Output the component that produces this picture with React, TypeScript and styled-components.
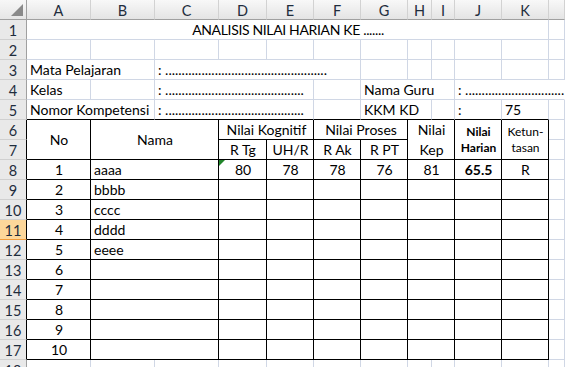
import styled, { createGlobalStyle } from 'styled-components'

const GRID = '#d0d7e5'
const INK = '#000000'

const GlobalStyle = createGlobalStyle`
  html, body {
    margin: 0;
    padding: 0;
    background: #ffffff;
    overflow: hidden;
  }
`

// worksheet: row-header column, A..K, then a sliver of L
const Sheet = styled.div`
  display: grid;
  grid-template-columns: 27px 64px 64px 64px 48px 47px 47px 47px 24px 23px 47px 47px 1fr;
  grid-template-rows: repeat(19, 20px);
  width: 565px;
  height: 367px;
  overflow: hidden;
  background: #ffffff;
  font-family: Lato, "Liberation Sans", sans-serif;
  font-size: 14px;
  color: #000000;
`

const Corner = styled.div`
  grid-column: 1;
  grid-row: 1;
  position: relative;
  box-sizing: border-box;
  background: linear-gradient(#f7f7f7, #e6e6e6);
  border-right: 1px solid #a0a0a0;
  border-bottom: 1px solid #a0a0a0;

  &::after {
    content: '';
    position: absolute;
    right: 3px;
    bottom: 3px;
    width: 0;
    height: 0;
    border-left: 12px solid transparent;
    border-bottom: 12px solid #8a8a8a;
  }
`

const ColHead = styled.div<{ $c: number }>`
  grid-column: ${p => p.$c};
  grid-row: 1;
  box-sizing: border-box;
  display: flex;
  align-items: center;
  justify-content: center;
  background: linear-gradient(#f8f8f8, #e4e4e4);
  border-right: 1px solid #d2d2d2;
  border-bottom: 1px solid #a0a0a0;
  color: #1f2d3d;
  font-size: 14.5px;
  padding-top: 1px;
`

const RowHead = styled.div<{ $r: number; $selected?: boolean; $edge?: boolean }>`
  grid-column: 1;
  grid-row: ${p => p.$r + 1};
  box-sizing: border-box;
  display: flex;
  align-items: center;
  justify-content: center;
  background: ${p => (p.$selected ? '#fdd79a' : '#e9e9e9')};
  border-right: 1px solid ${p => (p.$edge ? INK : p.$selected ? '#f29b3a' : '#a0a0a0')};
  border-bottom: 1px solid ${p => (p.$selected ? '#f29b3a' : '#d0d0d0')};
  color: #1f2d3d;
  font-size: 14.5px;
  padding-top: 1px;
`

const Cell = styled.div<{
  $c: number
  $r: number
  $cs?: number
  $rs?: number
  $left?: boolean
  $right?: string
  $bottom?: string
  $bold?: boolean
  $small?: boolean
  $tight?: boolean
}>`
  grid-column: ${p => p.$c + 1} / span ${p => p.$cs ?? 1};
  grid-row: ${p => p.$r + 1} / span ${p => p.$rs ?? 1};
  position: relative;
  box-sizing: border-box;
  display: flex;
  flex-direction: column;
  justify-content: center;
  align-items: ${p => (p.$left ? 'flex-start' : 'center')};
  padding: 1px 2px 0 3px;
  border-right: 1px solid ${p => p.$right ?? GRID};
  border-bottom: 1px solid ${p => p.$bottom ?? GRID};
  white-space: nowrap;
  overflow: hidden;
  text-align: center;
  font-weight: ${p => (p.$bold ? 700 : 400)};
  font-size: ${p => (p.$small ? '12px' : 'inherit')};
  line-height: ${p => (p.$tight ? '16px' : '20px')};
`

const Title = styled(Cell)`
  letter-spacing: -0.35px;
`

// little green "number stored as text" flag
const TextFlag = styled.span`
  position: absolute;
  top: 0;
  left: 0;
  width: 0;
  height: 0;
  border-top: 6px solid #21852a;
  border-right: 6px solid transparent;
`

const columns = ['A', 'B', 'C', 'D', 'E', 'F', 'G', 'H', 'I', 'J', 'K', '']

const dots = (n: number) => ': ' + '.'.repeat(n)

const students = [
  { no: '1', name: 'aaaa', rtg: '80', uh: '78', rak: '78', rpt: '76', kep: '81', harian: '65.5', ket: 'R' },
  { no: '2', name: 'bbbb' },
  { no: '3', name: 'cccc' },
  { no: '4', name: 'dddd' },
  { no: '5', name: 'eeee' },
  { no: '6' },
  { no: '7' },
  { no: '8' },
  { no: '9' },
  { no: '10' },
] as Array<Record<string, string | undefined>>

const App = () => {
  return (
    <>
      <GlobalStyle />
      <Sheet>
        <Corner />
        {columns.map((c, i) => (
          <ColHead key={`col${i}`} $c={i + 2}>{c}</ColHead>
        ))}
        {Array.from({ length: 18 }, (_, i) => i + 1).map(r => (
          <RowHead key={`row${r}`} $r={r} $selected={r === 11} $edge={r >= 6 && r <= 17}>{r}</RowHead>
        ))}

        {/* header block */}
        <Title $c={1} $r={1} $cs={11}>ANALISIS NILAI HARIAN KE .......</Title>
        <Cell $c={12} $r={1} />

        {Array.from({ length: 12 }, (_, i) => (
          <Cell key={`r2c${i}`} $c={i + 1} $r={2} />
        ))}

        <Cell $c={1} $r={3} $cs={2} $left>Mata Pelajaran</Cell>
        <Cell $c={3} $r={3} $cs={4} $left>{dots(49)}</Cell>
        {[7, 8, 9, 10, 11, 12].map(c => <Cell key={`r3c${c}`} $c={c} $r={3} />)}

        <Cell $c={1} $r={4} $left>Kelas</Cell>
        <Cell $c={2} $r={4} />
        <Cell $c={3} $r={4} $cs={3} $left>{dots(42)}</Cell>
        <Cell $c={6} $r={4} />
        <Cell $c={7} $r={4} $cs={3} $left>Nama Guru</Cell>
        <Cell $c={10} $r={4} $cs={3} $left $right="transparent">{dots(40)}</Cell>

        <Cell $c={1} $r={5} $cs={2} $left $bottom={INK}>Nomor Kompetensi</Cell>
        <Cell $c={3} $r={5} $cs={3} $left $bottom={INK}>{dots(42)}</Cell>
        <Cell $c={6} $r={5} $bottom={INK} />
        <Cell $c={7} $r={5} $cs={2} $left $bottom={INK}>KKM KD</Cell>
        <Cell $c={9} $r={5} $bottom={INK} />
        <Cell $c={10} $r={5} $left $bottom={INK}>:</Cell>
        <Cell $c={11} $r={5} $left $bottom={INK}>75</Cell>
        <Cell $c={12} $r={5} />

        {/* table heading */}
        <Cell $c={1} $r={6} $rs={2} $right={INK} $bottom={INK}>No</Cell>
        <Cell $c={2} $r={6} $cs={2} $rs={2} $right={INK} $bottom={INK}>Nama</Cell>
        <Cell $c={4} $r={6} $cs={2} $right={INK} $bottom={INK}>Nilai Kognitif</Cell>
        <Cell $c={6} $r={6} $cs={2} $right={INK} $bottom={INK}>Nilai Proses</Cell>
        <Cell $c={8} $r={6} $cs={2} $rs={2} $right={INK} $bottom={INK}>
          <span>Nilai</span>
          <span>Kep</span>
        </Cell>
        <Cell $c={10} $r={6} $rs={2} $right={INK} $bottom={INK} $bold $small $tight>
          <span>Nilai</span>
          <span>Harian</span>
        </Cell>
        <Cell $c={11} $r={6} $rs={2} $right={INK} $bottom={INK} $small $tight>
          <span>Ketun-</span>
          <span>tasan</span>
        </Cell>
        <Cell $c={12} $r={6} />
        <Cell $c={4} $r={7} $right={INK} $bottom={INK}>R Tg</Cell>
        <Cell $c={5} $r={7} $right={INK} $bottom={INK}>UH/R</Cell>
        <Cell $c={6} $r={7} $right={INK} $bottom={INK}>R Ak</Cell>
        <Cell $c={7} $r={7} $right={INK} $bottom={INK}>R PT</Cell>
        <Cell $c={12} $r={7} />

        {/* student rows */}
        {students.map((s, i) => {
          const r = i + 8
          return [
            <Cell key={`a${r}`} $c={1} $r={r} $right={INK} $bottom={INK}>{s.no}</Cell>,
            <Cell key={`b${r}`} $c={2} $r={r} $cs={2} $left $right={INK} $bottom={INK}>{s.name}</Cell>,
            <Cell key={`d${r}`} $c={4} $r={r} $right={INK} $bottom={INK}>
              {s.rtg && <TextFlag />}
              {s.rtg}
            </Cell>,
            <Cell key={`e${r}`} $c={5} $r={r} $right={INK} $bottom={INK}>{s.uh}</Cell>,
            <Cell key={`f${r}`} $c={6} $r={r} $right={INK} $bottom={INK}>{s.rak}</Cell>,
            <Cell key={`g${r}`} $c={7} $r={r} $right={INK} $bottom={INK}>{s.rpt}</Cell>,
            <Cell key={`h${r}`} $c={8} $r={r} $cs={2} $right={INK} $bottom={INK}>{s.kep}</Cell>,
            <Cell key={`j${r}`} $c={10} $r={r} $right={INK} $bottom={INK} $bold>{s.harian}</Cell>,
            <Cell key={`k${r}`} $c={11} $r={r} $right={INK} $bottom={INK}>{s.ket}</Cell>,
            <Cell key={`l${r}`} $c={12} $r={r} />,
          ]
        })}

        {Array.from({ length: 12 }, (_, i) => (
          <Cell key={`r18c${i}`} $c={i + 1} $r={18} />
        ))}
      </Sheet>
    </>
  )
}

export default App
